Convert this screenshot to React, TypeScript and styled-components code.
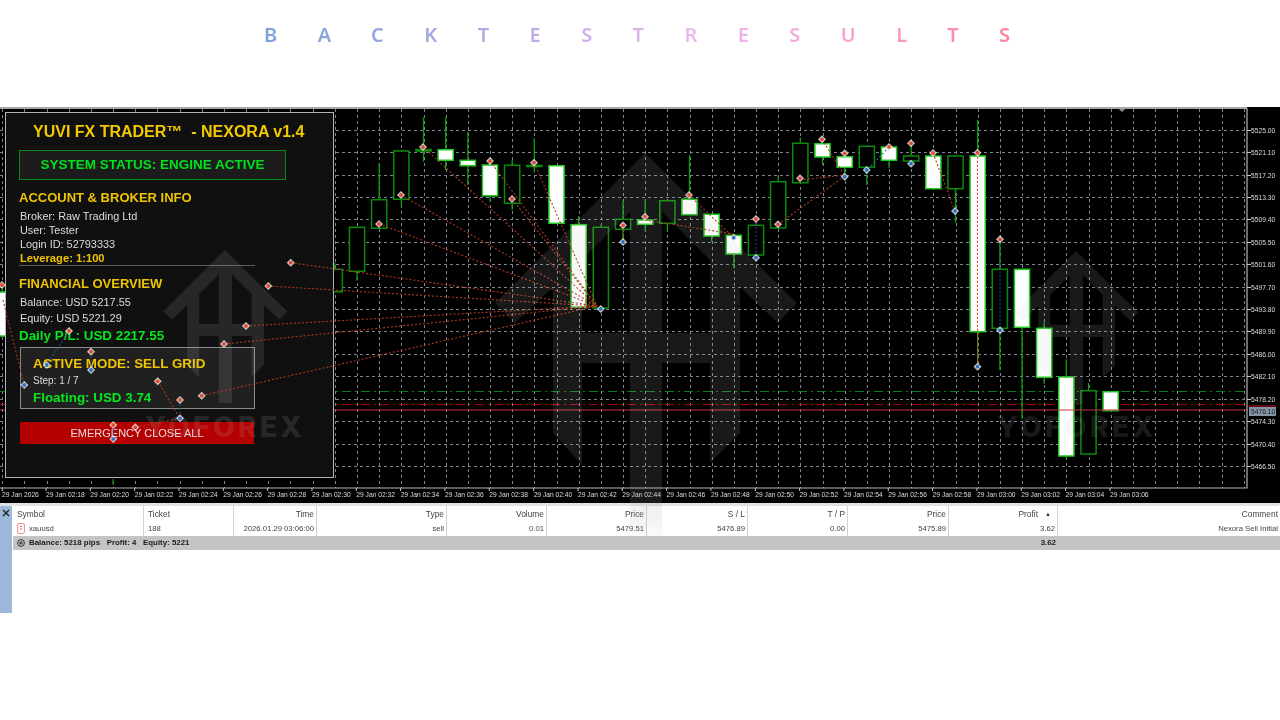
import React from "react";
import styled, { createGlobalStyle } from "styled-components";

const Global = createGlobalStyle`
  html, body { margin: 0; padding: 0; background: #fff; }
  body { font-family: "Liberation Sans", Arial, sans-serif; }
`;

const Page = styled.div`
  width: 1280px;
  height: 720px;
  overflow: hidden;
  background: #fff;
  display: flex;
  flex-direction: column;
`;
const Header = styled.header`
  height: 107px;
  flex: none;
  padding: 21px 0 0 264px;
  box-sizing: border-box;
`;
const Title = styled.h1`
  margin: 0;
  display: inline-block;
  font: 600 20px/27px "Noto Sans", sans-serif;
  letter-spacing: 40.45px;
  white-space: nowrap;
  color: transparent;
  background: linear-gradient(90deg, #7ba2dc 0%, #a2a8e0 22%, #d2b0ea 42%, #efb8ee 55%, #f5a6d4 72%, #fb8aa6 90%, #fd7a8a 100%);
  -webkit-background-clip: text;
  background-clip: text;
`;
const Terminal = styled.section`
  position: relative;
  flex: none;
  height: 506px;
  filter: blur(0.35px);
`;
const Stage = styled.div`
  height: 396px;
  background: #000;
`;
const ChartSvg = styled.svg`
  display: block;
`;
const Overlay = styled.svg`
  position: absolute;
  left: 0;
  top: 0;
  pointer-events: none;
`;
const Panel = styled.aside`
  position: absolute;
  left: 5px;
  top: 5px;
  width: 329px;
  height: 366px;
  box-sizing: border-box;
  border: 1px solid #b4b4b4;
  background: #101010;
  padding: 9px 0 0 13px;
  display: flex;
  flex-direction: column;
  align-items: flex-start;
  font-size: 10.9px;
  color: #dcdcdc;
`;
const PanelTitle = styled.div`
  height: 20px;
  margin-left: 14px;
  font: bold 16px/20px "Liberation Sans", sans-serif;
  color: #f2c900;
  white-space: pre;
`;
const StatusBox = styled.div`
  width: 267px;
  height: 30px;
  margin-top: 8px;
  box-sizing: border-box;
  border: 1px solid #0a8a12;
  background: #1c1c1c;
  color: #00e01c;
  font: bold 13.5px/28px "Liberation Sans", sans-serif;
  text-align: center;
`;
const Heading = styled.div<{ $top: number }>`
  height: 20px;
  margin-top: ${(p) => p.$top}px;
  font: bold 13px/20px "Liberation Sans", sans-serif;
  color: #efc400;
`;
const InfoLine = styled.div<{ $h?: number; $top?: number; $tone?: "plain" | "gold" }>`
  height: ${(p) => p.$h ?? 14}px;
  margin: ${(p) => p.$top ?? 0}px 0 0 1px;
  line-height: ${(p) => p.$h ?? 14}px;
  font-weight: ${(p) => (p.$tone === "gold" ? "bold" : "normal")};
  font-size: ${(p) => (p.$tone === "gold" ? 11.2 : 10.9)}px;
  color: ${(p) => (p.$tone === "gold" ? "#efc400" : "#dcdcdc")};
`;
const Profit = styled.div<{ $h: number; $top?: number }>`
  height: ${(p) => p.$h}px;
  margin-top: ${(p) => p.$top ?? 0}px;
  font: bold 13.4px/${(p) => p.$h}px "Liberation Sans", sans-serif;
  color: #06e61c;
`;
const Divider = styled.div`
  width: 236px;
  height: 1px;
  background: #5c5c5c;
`;
const ModeBox = styled.div`
  width: 235px;
  height: 62px;
  margin: 2px 0 0 1px;
  box-sizing: border-box;
  border: 1px solid #8c8c8c;
  background: #202020;
  padding: 6px 0 0 12px;
`;
const ModeTitle = styled.div`
  height: 20px;
  font: bold 13.4px/20px "Liberation Sans", sans-serif;
  color: #efc400;
`;
const ModeStep = styled.div`
  height: 14px;
  font-size: 10px;
  line-height: 14px;
`;
const EmergencyButton = styled.div`
  width: 234px;
  height: 22px;
  margin: 13px 0 0 1px;
  background: #b40000;
  color: #f0dcdc;
  font-size: 11px;
  line-height: 22px;
  text-align: center;
`;

const cols = "131px 90px 83px 130px 100px 100px 101px 100px 101px 109px 222px";
const Dock = styled.div`
  height: 110px;
  display: flex;
  flex-direction: column;
  background: #fff;
`;
const DockRule = styled.div`
  height: 3px;
  background: #e2e2e2;
  flex: none;
`;
const DockBody = styled.div`
  flex: 1;
  display: flex;
`;
const Strip = styled.div`
  width: 12px;
  flex: none;
  background: #9cb8d8;
  display: flex;
  justify-content: center;
  padding-top: 3px;
  box-sizing: border-box;
`;
const Table = styled.div`
  flex: 1;
  margin-left: 1px;
`;
const Row = styled.div<{ $kind: "head" | "data" | "total" }>`
  display: grid;
  grid-template-columns: ${cols};
  height: ${(p) => (p.$kind === "total" ? 14 : 15)}px;
  font-size: ${(p) => (p.$kind === "head" ? 8.4 : p.$kind === "data" ? 7.7 : 7.9)}px;
  background: ${(p) => (p.$kind === "total" ? "#c4c4c4" : "#fff")};
  color: ${(p) => (p.$kind === "total" ? "#1c1c1c" : "#444")};
  font-weight: ${(p) => (p.$kind === "total" ? "bold" : "normal")};
`;
const Cell = styled.div<{ $right?: boolean; $span?: number; $rule?: boolean; $gap?: number }>`
  grid-column: span ${(p) => p.$span ?? 1};
  display: flex;
  align-items: center;
  justify-content: ${(p) => (p.$right ? "flex-end" : "flex-start")};
  gap: ${(p) => p.$gap ?? 4}px;
  padding: 0 2px 0 4px;
  box-sizing: border-box;
  line-height: 14px;
  white-space: pre;
  border-right: ${(p) => (p.$rule ? "1px solid #d2d2d2" : "0")};
`;
const SortMark = styled.span`
  font-size: 6px;
  margin: 0 4px 0 7px;
  color: #333;
`;

const X = (n: number) => 357 + 22.167 * n;
const crisp = (v: number) => Math.round(v) + 0.5;
type C = [number, number, number, number?, number?, boolean?];
// n, bodyTop, bodyBottom, wickTop, wickBottom, white
const candles: C[] = [
  [-16, 292, 336, 285, 338, true],
  [-1, 269.3, 291.7, 262.7, 292, false],
  [0, 227.3, 271.3, 227, 280.7, false],
  [1, 199.7, 228.3, 163.3, 229, false],
  [2, 151, 199.3, 150, 206, false],
  [3, 149.6, 151, 117.3, 161.7, false],
  [4, 149.7, 160.3, 117.3, 170, true],
  [5, 160.3, 165.7, 131.7, 185, true],
  [6, 165, 195.7, 161, 201.7, true],
  [7, 165.3, 203.3, 160, 210, false],
  [8, 165.5, 166.5, 138.3, 172.7, false],
  [9, 165.7, 223.3, 165, 224, true],
  [10, 224.7, 307.3, 216, 308, true],
  [11, 227.3, 308, 225, 309, false],
  [12, 219.3, 229.3, 201, 241.7, false],
  [13, 220, 224.3, 199, 231, true],
  [14, 200.7, 223.3, 200, 230.7, false],
  [15, 199.3, 214.7, 155, 215, true],
  [16, 214.3, 236, 214, 241.7, true],
  [17, 235.3, 254, 235, 268.3, true],
  [18, 225.3, 255, 225, 255, false],
  [19, 181.7, 228, 176, 228, false],
  [20, 143.3, 182.7, 137.7, 183, false],
  [21, 143.7, 157, 143, 165, true],
  [22, 156.7, 167.3, 156, 176.7, true],
  [23, 146.3, 167.3, 146, 185, false],
  [24, 147, 160.3, 147, 168.3, true],
  [25, 156, 161, 145.7, 161, false],
  [26, 156, 188.7, 156, 189, true],
  [27, 156, 188.7, 156, 222.7, false],
  [28, 156, 331.7, 120, 366.7, true],
  [29, 269.3, 328.3, 239, 370, false],
  [30, 269.3, 327.3, 269, 419, true],
  [31, 328.3, 377.3, 321.7, 384, true],
  [32, 377, 456, 359.3, 460, true],
  [33, 390.7, 454, 383, 455, false],
  [34, 391.7, 410.7, 391, 411, true],
];

const RED = "#e8492a";
const BLUE = "#2a72c4";
const TRADE = "#ad3a20";
const WATERMARK = 0.125;
const CONVERGE: [number, number] = [597, 306];
const longTrades: [number, number][] = [
  [290.7, 262.7], [268.3, 286], [246, 326], [224, 344], [201.7, 395.7],
  [379, 224], [401, 195], [423, 147], [490, 161], [512, 199], [534, 162.7],
];
const shortTrades: [number, number, number, number, string?][] = [
  [623, 225.3, 623, 242],
  [645, 220, 733.7, 234],
  [689, 195, 733.7, 237.7],
  [778, 224.3, 845, 176],
  [800, 180, 845, 175],
  [822, 139.3, 845, 176],
  [889, 147, 867, 170, BLUE],
  [933, 153, 955, 211],
  [1000, 239.3, 1000, 330, "#1d4d86"],
  [977.5, 152.7, 977.5, 366.7, "#ef3a2a"],
  [756, 219, 756, 257.7, "#1d4d86"],
];
const panelTrades: [number, number, number, number, string?][] = [
  [69, 331, 46.7, 365, "#1d4d86"],
  [91, 351.7, 91, 370, "#1d4d86"],
  [157.7, 381.3, 180, 418.3],
  [180, 400, 180, 418.3, "#1d4d86"],
  [135.3, 427.3, 180, 418.3],
  [113.3, 425, 113.3, 439, "#1d4d86"],
  [3, 300, 24.3, 385],
];
const chartReds: [number, number][] = [
  [379, 224], [401, 195], [423, 147], [490, 161], [512, 199], [534, 162.7], [623, 225.3],
  [645, 216.7], [689, 195], [756, 219], [778, 224.3], [800, 178.3], [822, 139.3],
  [844.7, 153.3], [889, 147], [911, 143.3], [933, 153], [977.5, 152.7], [1000, 239.3],
];
const chartBlues: [number, number][] = [
  [600.7, 309], [623, 242], [733.7, 237.7], [756, 257.7], [844.7, 176.7], [866.7, 170],
  [911, 163.7], [955, 211], [977.5, 366.7], [1000, 330.3],
];
const panelReds: [number, number][] = [
  [290.7, 262.7], [268.3, 286], [246, 326], [224, 344], [201.7, 395.7], [180, 400],
  [157.7, 381.3], [135.3, 427.3], [113.3, 425], [91, 351.7], [69, 331], [2, 285],
];
const panelBlues: [number, number][] = [
  [46.7, 365], [91, 370], [24.3, 385], [180, 418.3], [113.3, 439],
];

const Marker = ({ x, y, c }: { x: number; y: number; c: string }) => (
  <g>
    <polygon points={`${x},${y - 4} ${x + 4},${y} ${x},${y + 4} ${x - 4},${y}`} fill="#e6e6e6" opacity={0.85} />
    <circle cx={x} cy={y} r={1.9} fill={c} />
  </g>
);

const logoPath = (b: number) =>
  `M645 153L797 303L778 323L740 287L740 433L710 463L710 363L662 363L662 ${b}L630 ${b}L630 363L582 363L582 465L553 433L553 287L515 323L495 303Z` +
  "M582 333L582 260L630 212L630 333Z M662 333L662 212L710 260L710 333Z";

const times: string[] = [];
for (let k = 24; k >= 0; k--) {
  const total = 3 * 60 + 6 - 2 * k;
  const h = Math.floor(total / 60);
  const m = total % 60;
  times.push(`29 Jan ${String(h).padStart(2, "0")}:${String(m).padStart(2, "0")}`);
}
const axisFont = { fontFamily: '"Liberation Sans", sans-serif', fontSize: 6.7, fill: "#dedede" };

const Chart = () => {
  const verticals: number[] = [];
  for (let n = -16; n <= 40; n++) if (X(n) < 1246) verticals.push(crisp(X(n)));
  const horizontals = Array.from({ length: 16 }, (_, i) => ({
    y: crisp(129.7 + 22.42 * i),
    label: (5525 - 3.9 * i).toFixed(2),
  }));
  return (
    <ChartSvg width={1280} height={396} viewBox="0 107 1280 396">
      {verticals.map((x) => (
        <line key={x} x1={x} x2={x} y1={109} y2={488} stroke="#7c8490" strokeDasharray="3 3" />
      ))}
      {horizontals.map((h) => (
        <line key={h.y} x1={0} x2={1247} y1={h.y} y2={h.y} stroke="#7c8490" strokeDasharray="3 3" />
      ))}
      <line x1={0} x2={1247} y1={391.5} y2={391.5} stroke="#0f7a1a" strokeWidth={1.2} strokeDasharray="9 4 2 4" />
      <line x1={0} x2={1247} y1={404.5} y2={404.5} stroke="#b00010" strokeWidth={1.2} strokeDasharray="9 4 2 4" />
      {candles.map(([n, top, bot, wt, wb, white]) => {
        const x = X(n);
        const edge = white ? "#1fc81f" : "#0a8c0a";
        return (
          <g key={n}>
            <line x1={x} x2={x} y1={wt} y2={wb} stroke="#0aa00a" strokeWidth={1.3} />
            <rect
              x={x - 7.6}
              y={top}
              width={15.2}
              height={bot - top}
              fill={white ? "#fff" : "#000"}
              stroke={edge}
              strokeWidth={1.5}
            />
          </g>
        );
      })}
      <line x1={0} x2={1247} y1={410} y2={410} stroke="#c8323c" strokeWidth={1.2} />
      {longTrades.map(([x, y]) => (
        <line key={x} x1={x} y1={y} x2={CONVERGE[0]} y2={CONVERGE[1]} stroke={TRADE} strokeWidth={1.1} strokeDasharray="2 2" />
      ))}
      {shortTrades.map(([a, b, c, d, col]) => (
        <line key={`${a}-${b}`} x1={a} y1={b} x2={c} y2={d} stroke={col ?? TRADE} strokeWidth={1.1} strokeDasharray="2 2" />
      ))}
      {chartReds.map(([x, y]) => (
        <Marker key={x} x={x} y={y} c={RED} />
      ))}
      {chartBlues.map(([x, y]) => (
        <Marker key={x} x={x} y={y} c={BLUE} />
      ))}
      <polyline points="0,108 1247,108" stroke="#a6a6a6" strokeWidth={2} fill="none" />
      <polyline points="1247,108 1247,488 0,488" stroke="#b4b4b4" strokeWidth={1.2} fill="none" />
      <polygon points="1119,109 1125,109 1122,112" fill="#8b9ab0" />
      {horizontals.map((h) => (
        <g key={h.label}>
          <line x1={1247} x2={1251} y1={h.y} y2={h.y} stroke="#c8c8c8" />
          <text {...axisFont} x={1251} y={h.y + 2.5}>{h.label}</text>
        </g>
      ))}
      <rect x={1249} y={407} width={27} height={9} fill="#8494a8" />
      <line x1={1249} x2={1276} y1={406} y2={406} stroke="#d01020" />
      <text {...axisFont} x={1251} y={414} fill="#1a1a1a">5476.10</text>
      <line x1={2.3} x2={2.3} y1={488} y2={491} stroke="#c8c8c8" />
      <text {...axisFont} x={2} y={497}>29 Jan 2026</text>
      {times.map((t, i) => {
        const x = 46 + 44.33 * i;
        return (
          <g key={t}>
            <line x1={x} x2={x} y1={488} y2={491} stroke="#c8c8c8" />
            <text {...axisFont} x={x} y={497}>{t}</text>
          </g>
        );
      })}
    </ChartSvg>
  );
};

const SmallLogo = ({ x, y }: { x: number; y: number }) => (
  <path
    transform={`translate(${x} ${y}) scale(0.41) translate(-645 -153)`}
    d={logoPath(526)}
    fillRule="evenodd"
    fill="#c8c8c8"
    opacity={WATERMARK}
  />
);

const Brand = ({ x }: { x: number }) => (
  <text
    x={x}
    y={437}
    fontFamily='"Inter", sans-serif'
    fontWeight={800}
    fontSize={28}
    letterSpacing={3.4}
    textAnchor="middle"
    fill="#c8c8c8"
    opacity={WATERMARK}
  >
    YOFOREX
  </text>
);

const ChartOverlay = () => (
  <Overlay width={1280} height={506} viewBox="0 107 1280 506">
    <defs>
      <linearGradient id="fade" x1="0" x2="0" y1="0" y2="1">
        <stop offset="0" stopColor="#a8a8a8" stopOpacity={0.15} />
        <stop offset="0.6" stopColor="#a8a8a8" stopOpacity={0.15} />
        <stop offset="1" stopColor="#a8a8a8" stopOpacity={0} />
      </linearGradient>
    </defs>
    <path d={logoPath(470)} fillRule="evenodd" fill="#c8c8c8" opacity={WATERMARK} />
    <rect x={630} y={470} width={32} height={78} fill="url(#fade)" />
    <SmallLogo x={225} y={250} />
    <SmallLogo x={1076} y={251} />
    <Brand x={225} />
    <Brand x={1077} />
    {panelTrades.map(([a, b, c, d, col]) => (
      <line key={`${a}-${b}`} x1={a} y1={b} x2={c} y2={d} stroke={col ?? TRADE} strokeWidth={1.1} strokeDasharray="2 2" />
    ))}
    {longTrades.slice(0, 5).map(([x, y]) => (
      <line key={x} x1={x} y1={y} x2={334} y2={y + ((CONVERGE[1] - y) * (334 - x)) / (CONVERGE[0] - x)} stroke={TRADE} strokeWidth={1.1} strokeDasharray="2 2" />
    ))}
    {panelReds.map(([x, y]) => (
      <Marker key={x} x={x} y={y} c={RED} />
    ))}
    {panelBlues.map(([x, y]) => (
      <Marker key={x} x={x} y={y} c={BLUE} />
    ))}
    <line x1={113} x2={113} y1={479} y2={485} stroke="#0aa00a" />
  </Overlay>
);

const Pending = () => (
  <svg width="8" height="11" viewBox="0 0 8 11">
    <rect x="0.6" y="0.6" width="6.8" height="9.8" rx="1" fill="#fff" stroke="#ec8a8a" strokeWidth="1" />
    <line x1="3" x2="5" y1="3.5" y2="3.5" stroke="#d86060" />
    <line x1="3" x2="5" y1="6" y2="6" stroke="#d86060" />
  </svg>
);
const Expand = () => (
  <svg width="8" height="8" viewBox="0 0 8 8">
    <circle cx="4" cy="4" r="3.4" fill="none" stroke="#222" strokeWidth="0.9" />
    <path d="M2 4H6M4 2V6" stroke="#222" strokeWidth="0.9" />
  </svg>
);
const Close = () => (
  <svg width="8" height="8" viewBox="0 0 8 8">
    <path d="M1 1L7 7M7 1L1 7" stroke="#222" strokeWidth="1.4" />
  </svg>
);

export default function App() {
  return (
    <Page>
      <Global />
      <Header>
        <Title>BACKTESTRESULTS</Title>
      </Header>
      <Terminal>
        <Stage>
          <Chart />
        </Stage>
        <Panel>
          <PanelTitle>YUVI FX TRADER™  - NEXORA v1.4</PanelTitle>
          <StatusBox>SYSTEM STATUS: ENGINE ACTIVE</StatusBox>
          <Heading $top={8}>ACCOUNT &amp; BROKER INFO</Heading>
          <InfoLine $top={1}>Broker: Raw Trading Ltd</InfoLine>
          <InfoLine>User: Tester</InfoLine>
          <InfoLine>Login ID: 52793333</InfoLine>
          <InfoLine $tone="gold">Leverage: 1:100</InfoLine>
          <Divider />
          <Heading $top={8}>FINANCIAL OVERVIEW</Heading>
          <InfoLine $top={1}>Balance: USD 5217.55</InfoLine>
          <InfoLine $top={2}>Equity: USD 5221.29</InfoLine>
          <Profit $h={18} $top={2}>Daily P/L: USD 2217.55</Profit>
          <ModeBox>
            <ModeTitle>ACTIVE MODE: SELL GRID</ModeTitle>
            <ModeStep>Step: 1 / 7</ModeStep>
            <Profit $h={20}>Floating: USD 3.74</Profit>
          </ModeBox>
          <EmergencyButton>EMERGENCY CLOSE ALL</EmergencyButton>
        </Panel>
        <Dock>
          <DockRule />
          <DockBody>
            <Strip>
              <Close />
            </Strip>
            <Table>
              <Row $kind="head">
                <Cell $rule>Symbol</Cell>
                <Cell $rule>Ticket</Cell>
                <Cell $rule $right>Time</Cell>
                <Cell $rule $right>Type</Cell>
                <Cell $rule $right>Volume</Cell>
                <Cell $rule $right>Price</Cell>
                <Cell $rule $right>S / L</Cell>
                <Cell $rule $right>T / P</Cell>
                <Cell $rule $right>Price</Cell>
                <Cell $rule $right $gap={0}>Profit<SortMark>▲</SortMark></Cell>
                <Cell $right>Comment</Cell>
              </Row>
              <Row $kind="data">
                <Cell $rule><Pending />xauusd</Cell>
                <Cell $rule>188</Cell>
                <Cell $rule $right>2026.01.29 03:06:00</Cell>
                <Cell $rule $right>sell</Cell>
                <Cell $rule $right>0.01</Cell>
                <Cell $rule $right>5479.51</Cell>
                <Cell $rule $right>5476.89</Cell>
                <Cell $rule $right>0.00</Cell>
                <Cell $rule $right>5475.89</Cell>
                <Cell $rule $right>3.62</Cell>
                <Cell $right>Nexora Sell Initial</Cell>
              </Row>
              <Row $kind="total">
                <Cell $span={9}><Expand />Balance: 5218 pips   Profit: 4   Equity: 5221</Cell>
                <Cell $right>3.62</Cell>
                <Cell />
              </Row>
            </Table>
          </DockBody>
        </Dock>
        <ChartOverlay />
      </Terminal>
    </Page>
  );
}
